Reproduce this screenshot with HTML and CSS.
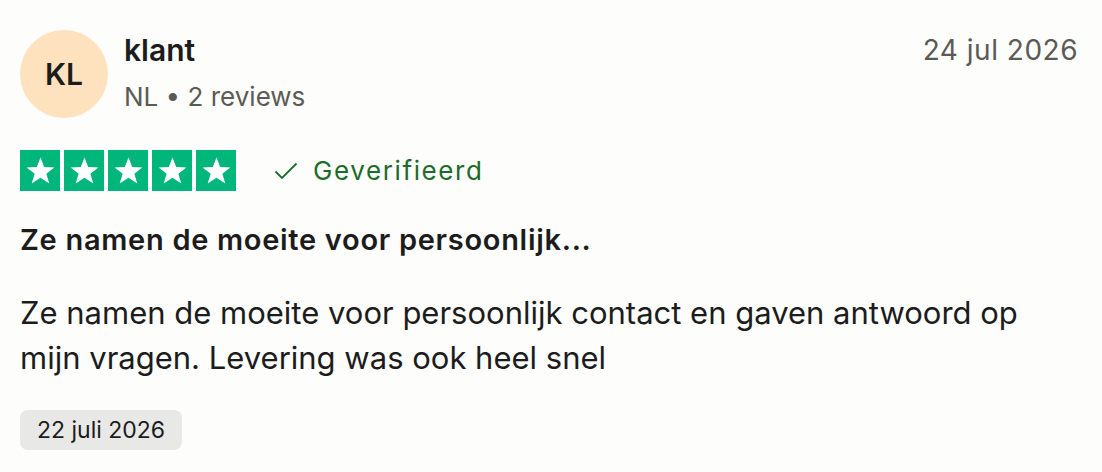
FILE: index.html
```html
<!DOCTYPE html>
<html lang="nl">
<head>
<meta charset="utf-8">
<link rel="stylesheet" href="styles.css">
</head>
<body>
<article class="review">
  <header class="head">
    <div class="avatar">KL</div>
    <div class="who">
      <div class="name">klant</div>
      <div class="meta">NL • 2 reviews</div>
    </div>
    <time class="date">24 jul 2026</time>
  </header>
  <div class="rating-row">
    <div class="stars">
      <span class="star"><svg viewBox="0 0 24 24"><path d="M12 3.5l2.4 6.3 6.6.2-5.2 4.1 1.9 6.4L12 16.7l-5.7 3.8 1.9-6.4L3 10l6.6-.2z" fill="#fff"/></svg></span>
      <span class="star"><svg viewBox="0 0 24 24"><path d="M12 3.5l2.4 6.3 6.6.2-5.2 4.1 1.9 6.4L12 16.7l-5.7 3.8 1.9-6.4L3 10l6.6-.2z" fill="#fff"/></svg></span>
      <span class="star"><svg viewBox="0 0 24 24"><path d="M12 3.5l2.4 6.3 6.6.2-5.2 4.1 1.9 6.4L12 16.7l-5.7 3.8 1.9-6.4L3 10l6.6-.2z" fill="#fff"/></svg></span>
      <span class="star"><svg viewBox="0 0 24 24"><path d="M12 3.5l2.4 6.3 6.6.2-5.2 4.1 1.9 6.4L12 16.7l-5.7 3.8 1.9-6.4L3 10l6.6-.2z" fill="#fff"/></svg></span>
      <span class="star"><svg viewBox="0 0 24 24"><path d="M12 3.5l2.4 6.3 6.6.2-5.2 4.1 1.9 6.4L12 16.7l-5.7 3.8 1.9-6.4L3 10l6.6-.2z" fill="#fff"/></svg></span>
    </div>
    <div class="verified">
      <svg class="check" viewBox="0 0 24 18"><path d="M1.5 9.5l6.5 6.5L22.5 1.5" fill="none" stroke="#1c6b2a" stroke-width="1.8"/></svg>
      <span>Geverifieerd</span>
    </div>
  </div>
  <h2 class="title">Ze namen de moeite voor persoonlijk...</h2>
  <p class="body">Ze namen de moeite voor persoonlijk contact en gaven antwoord op mijn vragen. Levering was ook heel snel</p>
  <span class="tag">22 juli 2026</span>
</article>
</body>
</html>
```
FILE: styles.css
```css
html, body {
  margin: 0;
  background: #fdfdfc;
}
body {
  font-family: Inter, "Noto Sans", sans-serif;
  color: #1c1c1c;
}
.review {
  padding: 30px 24px 0 20px;
  width: 1058px;
}
.head {
  display: flex;
  align-items: flex-start;
}
.avatar {
  width: 88px;
  height: 88px;
  border-radius: 50%;
  background: #fee2bd;
  display: flex;
  align-items: center;
  justify-content: center;
  font-size: 30px;
  font-weight: 600;
  color: #1c1c1c;
  flex: none;
}
.who {
  margin-left: 16px;
  flex: 1;
}
.name {
  font-size: 30px;
  font-weight: 600;
  line-height: 40px;
}
.meta {
  font-size: 26px;
  color: #5b5a55;
  line-height: 30px;
  margin-top: 12px;
}
.date {
  font-size: 28px;
  color: #5b5a55;
  line-height: 40px;
  letter-spacing: 0.5px;
}
.rating-row {
  display: flex;
  align-items: center;
  margin-top: 32px;
}
.stars {
  display: flex;
  gap: 4px;
}
.star {
  width: 40px;
  height: 41px;
  background: #00b67a;
  display: flex;
  align-items: center;
  justify-content: center;
  overflow: hidden;
}
.star svg {
  width: 37px;
  height: 37px;
  flex: none;
}
.verified {
  display: flex;
  align-items: center;
  margin-left: 38px;
  color: #1c6b2a;
  font-size: 26px;
  letter-spacing: 1.6px;
}
.check {
  width: 24px;
  height: 18px;
  margin-right: 15px;
}
.title {
  font-size: 29px;
  font-weight: 600;
  letter-spacing: 0.7px;
  margin: 33px 0 0;
  line-height: 32px;
}
.body {
  font-size: 31px;
  line-height: 45px;
  margin: 34px 0 0;
  max-width: 1050px;
}
.tag {
  display: inline-block;
  margin-top: 30px;
  background: #e8e8e6;
  border-radius: 8px;
  font-size: 23px;
  line-height: 40px;
  padding: 0 17px;
}
```
